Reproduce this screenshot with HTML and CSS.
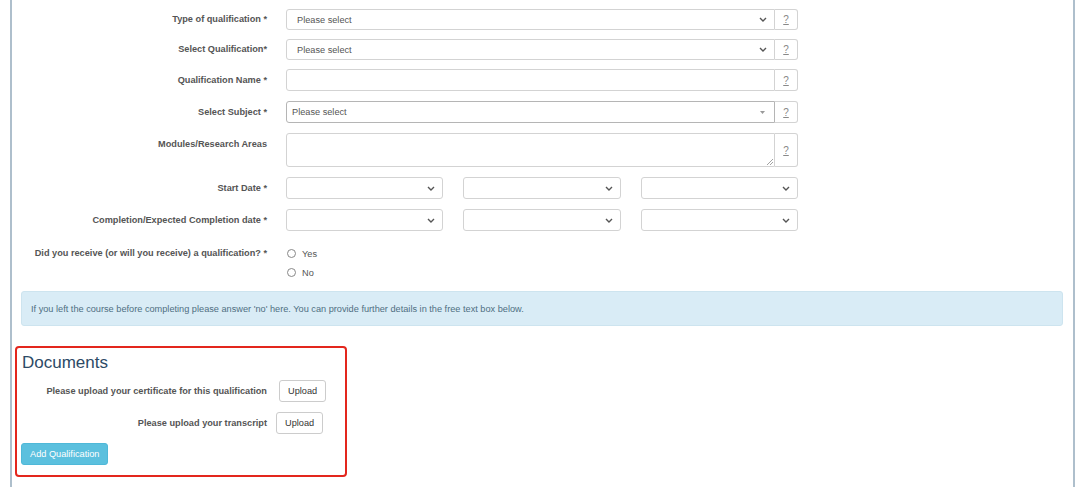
FILE: index.html
```html
<!DOCTYPE html>
<html>
<head>
<meta charset="UTF-8">
<title>Add Qualification</title>
<link rel="stylesheet" href="styles.css">
</head>
<body>
<div class="panel">
  <form class="qual-form">
    <div class="row short">
      <label class="lbl">Type of qualification *</label>
      <div class="group">
        <div class="ctl sel"><span>Please select</span>
          <svg class="chev" width="8" height="5" viewBox="0 0 8 5"><polyline points="1,1 4,4 7,1" fill="none" stroke="#555" stroke-width="1.4"/></svg>
        </div>
        <span class="addon">?</span>
      </div>
    </div>
    <div class="row short">
      <label class="lbl">Select Qualification*</label>
      <div class="group">
        <div class="ctl sel"><span>Please select</span>
          <svg class="chev" width="8" height="5" viewBox="0 0 8 5"><polyline points="1,1 4,4 7,1" fill="none" stroke="#555" stroke-width="1.4"/></svg>
        </div>
        <span class="addon">?</span>
      </div>
    </div>
    <div class="row">
      <label class="lbl">Qualification Name *</label>
      <div class="group">
        <div class="ctl"></div>
        <span class="addon">?</span>
      </div>
    </div>
    <div class="row">
      <label class="lbl">Select Subject *</label>
      <div class="group">
        <div class="ctl sel2"><span>Please select</span>
          <svg width="5" height="3" viewBox="0 0 5 3"><polygon points="0,0 5,0 2.5,3" fill="#999"/></svg>
        </div>
        <span class="addon">?</span>
      </div>
    </div>
    <div class="row">
      <label class="lbl">Modules/Research Areas</label>
      <div class="group tall">
        <div class="ctl area">
          <svg class="grip" width="7" height="7" viewBox="0 0 7 7"><path d="M7 1 L1 7 M7 4 L4 7" stroke="#999" stroke-width="0.9"/></svg>
        </div>
        <span class="addon">?</span>
      </div>
    </div>
    <div class="row">
      <label class="lbl">Start Date *</label>
      <div class="dates">
        <div class="ctl sel"><span></span><svg class="chev" width="8" height="5" viewBox="0 0 8 5"><polyline points="1,1 4,4 7,1" fill="none" stroke="#555" stroke-width="1.4"/></svg></div>
        <div class="ctl sel"><span></span><svg class="chev" width="8" height="5" viewBox="0 0 8 5"><polyline points="1,1 4,4 7,1" fill="none" stroke="#555" stroke-width="1.4"/></svg></div>
        <div class="ctl sel"><span></span><svg class="chev" width="8" height="5" viewBox="0 0 8 5"><polyline points="1,1 4,4 7,1" fill="none" stroke="#555" stroke-width="1.4"/></svg></div>
      </div>
    </div>
    <div class="row">
      <label class="lbl">Completion/Expected Completion date *</label>
      <div class="dates">
        <div class="ctl sel"><span></span><svg class="chev" width="8" height="5" viewBox="0 0 8 5"><polyline points="1,1 4,4 7,1" fill="none" stroke="#555" stroke-width="1.4"/></svg></div>
        <div class="ctl sel"><span></span><svg class="chev" width="8" height="5" viewBox="0 0 8 5"><polyline points="1,1 4,4 7,1" fill="none" stroke="#555" stroke-width="1.4"/></svg></div>
        <div class="ctl sel"><span></span><svg class="chev" width="8" height="5" viewBox="0 0 8 5"><polyline points="1,1 4,4 7,1" fill="none" stroke="#555" stroke-width="1.4"/></svg></div>
      </div>
    </div>
    <div class="row radios">
      <label class="lbl">Did you receive (or will you receive) a qualification? *</label>
      <div class="opts">
        <div class="opt"><span class="dot"></span>Yes</div>
        <div class="opt"><span class="dot"></span>No</div>
      </div>
    </div>
  </form>

  <div class="alert">If you left the course before completing please answer 'no' here. You can provide further details in the free text box below.</div>

  <div class="docs">
    <h3 class="docs-title">Documents</h3>
    <div class="up-row">
      <span class="up-lbl">Please upload your certificate for this qualification</span>
      <button class="btn">Upload</button>
    </div>
    <div class="up-row second">
      <span class="up-lbl">Please upload your transcript</span>
      <button class="btn">Upload</button>
    </div>
    <button class="btn btn-info">Add Qualification</button>
  </div>
</div>
</body>
</html>
```

FILE: styles.css
```css
body {
  margin: 0;
  background: #fff;
  font-family: "Liberation Sans", Arial, sans-serif;
  font-size: 9.2px;
  color: #555;
}
.panel {
  margin-left: 10px;
  width: 1065px;
  min-height: 487px;
  box-sizing: border-box;
  border-left: 2px solid #aebfcc;
  border-right: 2px solid #aebfcc;
  padding-top: 9px;
}

/* form rows */
.row {
  display: grid;
  grid-template-columns: 255px 512px;
  column-gap: 19px;
  margin-bottom: 10px;
}
.row.short { margin-bottom: 9px; }
.lbl {
  text-align: right;
  font-weight: bold;
  line-height: 22px;
  color: #555;
}
.short .lbl { line-height: 21px; }
.group { display: flex; height: 22px; }
.short .group, .short .ctl { height: 21px; }
.group.tall { height: 34px; }
.ctl {
  flex: 1;
  box-sizing: border-box;
  height: 22px;
  border: 1px solid #d3d3d3;
  border-radius: 3px;
  background: #fff;
  display: flex;
  align-items: center;
  justify-content: space-between;
  padding: 0 7px 0 10px;
  color: #555;
}
.group .ctl { border-radius: 3px 0 0 3px; }
.sel2 { border-color: #b5b5b5; padding-left: 5px; padding-right: 9px; }
.area { height: 34px; align-items: flex-end; justify-content: flex-end; padding: 0 1px 1px 0; }
.addon {
  width: 23px;
  box-sizing: border-box;
  border: 1px solid #d3d3d3;
  border-left: none;
  border-radius: 0 3px 3px 0;
  display: flex;
  align-items: center;
  justify-content: center;
  color: #888;
  text-decoration: underline;
  font-size: 10px;
}
.dates {
  display: grid;
  grid-template-columns: repeat(3, 1fr);
  column-gap: 20px;
}

/* radios */
.row.radios { margin-bottom: 9px; padding-top: 3px; }
.radios .lbl { line-height: 19px; }
.opt { display: flex; align-items: center; height: 19px; color: #555; }
.dot {
  width: 7px;
  height: 7px;
  border: 1px solid #888;
  border-radius: 50%;
  margin: 0 6px 0 1px;
}

.alert {
  margin: 0 10px 20px 9px;
  height: 35px;
  box-sizing: border-box;
  background: #d9ecf6;
  border: 1px solid #cde4ef;
  border-radius: 3px;
  padding: 0 9px;
  display: flex;
  align-items: center;
  font-size: 9.2px;
  color: #4f6f82;
}

/* documents block */
.docs {
  margin-left: 3px;
  width: 332px;
  box-sizing: border-box;
  border: 2px solid #e3261d;
  border-radius: 4px;
  padding: 5px 4px 10px 4px;
}
.docs-title {
  margin: 0 0 7px 1px;
  font-size: 17px;
  font-weight: normal;
  line-height: 20px;
  color: #2d4a66;
}
.up-row {
  display: grid;
  grid-template-columns: 246px auto;
  column-gap: 12px;
  align-items: center;
  justify-items: start;
  margin-bottom: 10px;
}
.up-row.second { column-gap: 9px; margin-bottom: 9px; }
.up-lbl { justify-self: end; font-weight: bold; color: #555; }
.btn {
  height: 22px;
  padding: 0 8px;
  border: 1px solid #ccc;
  border-radius: 3px;
  background: #fff;
  font-family: "Liberation Sans", Arial, sans-serif;
  font-size: 9.2px;
  color: #333;
}
.btn-info {
  display: block;
  background: #5bc0de;
  border-color: #4fb8d8;
  color: #fff;
  padding: 0 8px;
}
```
